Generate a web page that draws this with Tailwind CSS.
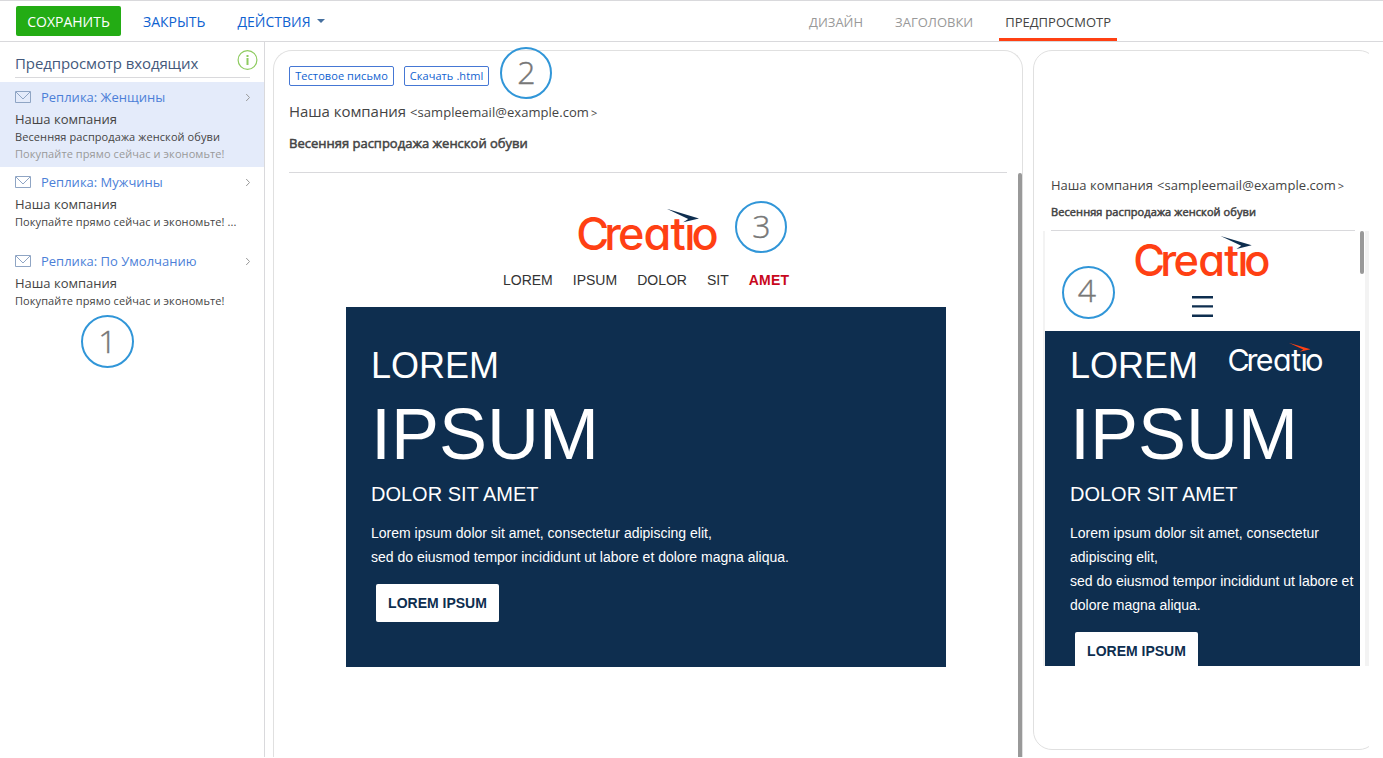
<!DOCTYPE html>
<html lang="ru">
<head>
<meta charset="utf-8">
<title>Предпросмотр</title>
<script src="https://cdn.jsdelivr.net/npm/@tailwindcss/browser@4"></script>
</head>
<body class="bg-white font-['Open_Sans',sans-serif] text-[#444] whitespace-nowrap">

<div class="relative h-[757px] w-[1383px] overflow-hidden flex flex-col">
  <header class="h-[42px] shrink-0 border-t border-b border-[#d9d9dc] flex justify-between">
    <div class="flex items-center h-10 pl-4 text-[14px] text-[#0f62d0]">
      <button class="w-[105px] h-[30px] rounded-[2px] bg-[#23ac14] text-white">СОХРАНИТЬ</button>
      <span class="ml-[22px]">ЗАКРЫТЬ</span>
      <span class="ml-[32px]">ДЕЙСТВИЯ</span>
      <svg class="ml-[6px] w-2 h-1" viewBox="0 0 8 4"><path d="M0 0H8L4 4Z" fill="#46709f"/></svg>
    </div>
    <nav class="flex h-10 mr-[266px] text-[13px] leading-[43px] text-[#999] gap-[26px]">
      <span>ДИЗАЙН</span>
      <span class="ml-[6px]">ЗАГОЛОВКИ</span>
      <span class="px-[6px] border-b-3 border-[#ff4013] text-[#444]">ПРЕДПРОСМОТР</span>
    </nav>
  </header>

  <div class="flex flex-1 min-h-0">
    <aside class="w-[265px] shrink-0 border-r border-[#d9d9dc]">
      <div class="h-[40px] relative">
        <div class="ml-[15px] w-[235px] h-9 border-b border-[#d9d9dc] pt-[11px] text-[15px] leading-[20px] tracking-[-0.1px] text-[#44597c]">Предпросмотр входящих</div>
        <svg class="absolute left-[237px] top-[7px] w-[21px] h-[21px]" viewBox="0 0 21 21" fill="none"><circle cx="10.5" cy="11" r="9.4" fill="#fff" stroke="#8ecb60" stroke-width="1.2"/><path d="M9.5 6h2v2h-2zM9.5 9h2v7h-2z" fill="#8ecb60"/></svg>
      </div>

      <section class="h-[85px] bg-[#e4ebfa] pl-[15px] pt-[6px]">
        <div class="flex items-center h-5 text-[13px] text-[#4c7fd8]">
          <svg class="w-4 h-3 -mt-[2px]" viewBox="0 0 16 12" fill="none" stroke="#8fa5c4"><path d="M.5 .5h15v11H.5zM1 1l7 7 7-7"/></svg>
          <span class="ml-[10px] w-[204px]">Реплика: Женщины</span>
          <svg class="w-[6px] h-[9px] -mt-px" viewBox="0 0 6 9" fill="none" stroke="#999"><path d="M1.2 1 4.5 4.5 1.2 8"/></svg>
        </div>
        <div class="mt-[1px] text-[13px] leading-[20px]">Наша компания</div>
        <div class="-mt-px text-[11px] leading-[17px] tracking-[0.09px]">Весенняя распродажа женской обуви</div>
        <div class="text-[11px] leading-[17px] tracking-[0.09px] text-[#999]">Покупайте прямо сейчас и экономьте!</div>
      </section>
      <section class="h-[79px] pl-[15px] pt-[6px]">
        <div class="flex items-center h-5 text-[13px] text-[#4c7fd8]">
          <svg class="w-4 h-3 -mt-[2px]" viewBox="0 0 16 12" fill="none" stroke="#8fa5c4"><path d="M.5 .5h15v11H.5zM1 1l7 7 7-7"/></svg>
          <span class="ml-[10px] w-[204px]">Реплика: Мужчины</span>
          <svg class="w-[6px] h-[9px] -mt-px" viewBox="0 0 6 9" fill="none" stroke="#999"><path d="M1.2 1 4.5 4.5 1.2 8"/></svg>
        </div>
        <div class="mt-[1px] text-[13px] leading-[20px]">Наша компания</div>
        <div class="-mt-px text-[11px] leading-[17px] tracking-[0.09px]">Покупайте прямо сейчас и экономьте! ...</div>
      </section>
      <section class="h-[79px] pl-[15px] pt-[6px]">
        <div class="flex items-center h-5 text-[13px] text-[#4c7fd8]">
          <svg class="w-4 h-3 -mt-[2px]" viewBox="0 0 16 12" fill="none" stroke="#8fa5c4"><path d="M.5 .5h15v11H.5zM1 1l7 7 7-7"/></svg>
          <span class="ml-[10px] w-[204px]">Реплика: По Умолчанию</span>
          <svg class="w-[6px] h-[9px] -mt-px" viewBox="0 0 6 9" fill="none" stroke="#999"><path d="M1.2 1 4.5 4.5 1.2 8"/></svg>
        </div>
        <div class="mt-[1px] text-[13px] leading-[20px]">Наша компания</div>
        <div class="-mt-px text-[11px] leading-[17px] tracking-[0.09px]">Покупайте прямо сейчас и экономьте!</div>
      </section>
    </aside>

    <!-- desktop preview -->
    <main class="ml-2 mt-2 w-[750px] shrink-0 border border-b-0 border-[#e0e0e0] rounded-t-[19px] flex flex-col">
      <div class="pl-[15px] pt-[15px] flex gap-[10px] text-[11px] leading-[18px] tracking-[0.08px] text-[#0f62d0]">
        <span class="w-[105px] border border-[#4577d4] rounded-[2px] text-center">Тестовое письмо</span>
        <span class="w-[85px] border border-[#4577d4] rounded-[2px] text-center">Скачать .html</span>
      </div>
      <div class="pl-[15px] mt-[15px] flex items-baseline leading-5">
        <span class="text-[15px] tracking-[-0.05px]">Наша компания</span><span class="ml-[4px] text-[13px] tracking-[0.05px]">&lt;sampleemail@example.com</span><span class="ml-[2px] text-[11px]">&gt;</span>
      </div>
      <div class="pl-[15px] mt-[10px] text-[13px] leading-5 [-webkit-text-stroke:0.5px_#444]">Весенняя распродажа женской обуви</div>
      <div class="mx-[15px] mt-[19px] border-b border-[#d9d9dc]"></div>
      <div class="flex flex-1 min-h-0">
        <div class="flex-1 pl-[72px] flex flex-col font-['Liberation_Sans',sans-serif]">
          <svg class="w-[142px] h-[44px] mt-[35px] ml-[231px]" viewBox="0 0 142 44">
            <clipPath id="nodot"><path d="M-5 0H106V17H125V50H-5ZM125 0H150V50H125Z"/></clipPath>
            <g clip-path="url(#nodot)"><text x="-.8 27.3 41 66.6 93.6 107.2 114.4" y="42.3" font-size="45" font-weight="500" fill="#ff4013" style="font-family:Inter,sans-serif;font-feature-settings:'cv11'">Creatio</text></g>
            <path d="M89.7 .8 122 10.4 106.2 14.3 111.2 10.9Z" fill="#0e2e4f"/>
          </svg>
          <div class="ml-[157px] mt-[18px] flex gap-5 text-[14px] leading-[20px] text-[#333]">
            <span>LOREM</span><span>IPSUM</span><span>DOLOR</span><span>SIT</span><b class="text-[#c8081c] tracking-[0.2px]">AMET</b>
          </div>
          <div class="w-[600px] h-[360px] mt-[17px] bg-[#0e2e4f] text-white pl-[25px] pt-[39px]">
            <div class="text-[36px] leading-10">LOREM</div>
            <div class="mt-[8px] text-[72px] leading-[80px]">IPSUM</div>
            <div class="mt-[8px] text-[20px] leading-6">DOLOR SIT AMET</div>
            <div class="mt-[15px] text-[14px] leading-6">Lorem ipsum dolor sit amet, consectetur adipiscing elit,<br>sed do eiusmod tempor incididunt ut labore et dolore magna aliqua.</div>
            <div class="mt-[15px] ml-[5px] w-[123px] h-[38px] rounded-[2px] bg-white text-[#0e2e4f] text-[14px] leading-[38px] font-bold text-center">LOREM IPSUM</div>
          </div>
        </div>
        <div class="w-1 rounded-t-[2px] bg-[#999]"></div>
      </div>
    </main>

    <!-- mobile preview -->
    <section class="ml-[10px] mt-2 w-[336px] h-[700px] shrink-0 overflow-hidden">
      <div class="w-[345px] h-[700px] border border-[#e0e0e0] rounded-[19px] flex flex-col">
        <div class="pl-[17px] mt-[124px] flex items-baseline leading-5">
          <span class="text-[13px]">Наша компания</span><span class="ml-[4px] text-[13px] tracking-[0.05px]">&lt;sampleemail@example.com</span><span class="ml-[2px] text-[11px]">&gt;</span>
        </div>
        <div class="pl-[17px] mt-[6px] text-[11px] leading-5 tracking-[0.09px] [-webkit-text-stroke:0.5px_#444]">Весенняя распродажа женской обуви</div>
        <div class="ml-[17px] mt-[8px] w-[304px] border-b border-[#d9d9dc]"></div>
        <div class="ml-[9px] w-[326px] h-[435px] border-l-2 border-[#f3f3f3] flex overflow-hidden font-['Liberation_Sans',sans-serif]">
          <div class="w-[315px] shrink-0">
            <svg class="w-[137px] h-[43px] mt-[4px] ml-[89px]" viewBox="0 0 142 44">
              <g clip-path="url(#nodot)"><text x="-.8 27.3 41 66.6 93.6 107.2 114.4" y="42.3" font-size="45" font-weight="500" fill="#ff4013" style="font-family:Inter,sans-serif;font-feature-settings:'cv11'">Creatio</text></g>
              <path d="M89.7 .8 122 10.4 106.2 14.3 111.2 10.9Z" fill="#0e2e4f"/>
            </svg>
            <svg class="ml-[146px] mt-[18px] w-[23px] h-[21px]" viewBox="0 0 23 21" fill="#0e2e4f"><path d="M1 0h21v2.4H1zM1 9.2h21v2.4H1zM1 18.5h21v2.4H1z"/></svg>
            <div class="mt-[14px] h-[400px] bg-[#0e2e4f] text-white pl-[25px] pt-[15px]">
              <div class="flex">
                <span class="text-[36px] leading-10">LOREM</span>
                <svg class="ml-[30px] -mt-[4px] w-[96px] h-[30px]" viewBox="0 0 142 44">
                  <g clip-path="url(#nodot)"><text x="-.8 27.3 41 66.6 93.6 107.2 114.4" y="42" font-size="45" font-weight="400" fill="#fff" style="font-family:Inter,sans-serif;font-feature-settings:'cv11'">Creatio</text></g>
                  <path d="M89.7 .8 122 10.4 106.2 14.3 111.2 10.9Z" fill="#ff4013"/>
                </svg>
              </div>
              <div class="mt-[8px] text-[72px] leading-[80px]">IPSUM</div>
              <div class="mt-[8px] text-[20px] leading-6">DOLOR SIT AMET</div>
              <div class="mt-[15px] text-[14px] leading-6">Lorem ipsum dolor sit amet, consectetur<br>adipiscing elit,<br>sed do eiusmod tempor incididunt ut labore et<br>dolore magna aliqua.</div>
              <div class="mt-[15px] ml-[5px] w-[123px] h-[38px] rounded-[2px] bg-white text-[#0e2e4f] text-[14px] leading-[38px] font-bold text-center">LOREM IPSUM</div>
            </div>
          </div>
          <div class="w-1 h-[43px] rounded-[2px] bg-[#999]"></div>
          <div class="ml-[1px] w-1 bg-[#f3f3f3]"></div>
        </div>
      </div>
    </section>
  </div>

  <!-- callouts -->
  <div class="absolute left-[81px] top-[315px] size-[53px] rounded-full border-2 border-[#3196d8] text-center text-[32px] font-light leading-[48px] text-[#777] [-webkit-text-stroke:0.4px_#777]">1</div>
  <div class="absolute left-[500px] top-[47px] size-[52px] rounded-full border-2 border-[#3196d8] text-center text-[32px] font-light leading-[46px] pl-px text-[#777] [-webkit-text-stroke:0.4px_#777]">2</div>
  <div class="absolute left-[735px] top-[201px] size-[52px] rounded-full border-2 border-[#3196d8] text-center text-[32px] font-light leading-[46px] pl-px text-[#777] [-webkit-text-stroke:0.4px_#777]">3</div>
  <div class="absolute left-[1062px] top-[266px] size-[53px] rounded-full border-2 border-[#3196d8] text-center text-[32px] font-light leading-[43px] pr-[3px] text-[#777] [-webkit-text-stroke:0.4px_#777]">4</div>
</div>
</body>
</html>
